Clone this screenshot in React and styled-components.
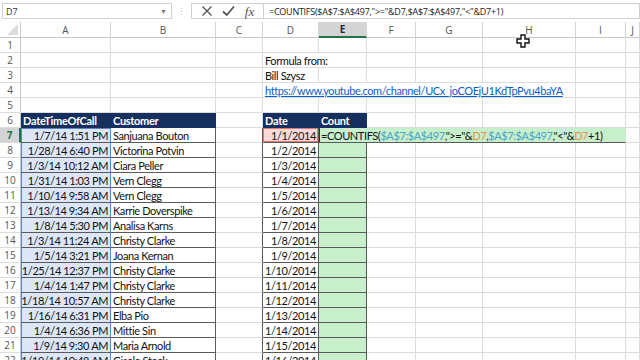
import React from 'react';
import styled, { createGlobalStyle } from 'styled-components';

const GlobalStyle = createGlobalStyle`
  html, body {
    margin: 0;
    padding: 0;
    background: #ffffff;
    overflow: hidden;
  }
  body {
    font-family: Lato, "Liberation Sans", sans-serif;
  }
`;

const GRID = '#dcdcdc';
const DARK = '#5a5a5a';
const NAVY = '#15305f';
const BLUE_EDGE = '#5b84c9';
const GREEN_FILL = '#c8efcc';

const Page = styled.div`
  position: relative;
  width: 640px;
  height: 360px;
  overflow: hidden;
  background: #fff;
`;

const Toolbar = styled.div`
  display: flex;
  align-items: center;
  height: 22px;
  padding: 0 0 0 2px;
  box-sizing: border-box;
  background: #ffffff;
`;

const NameBox = styled.div`
  display: flex;
  align-items: center;
  justify-content: space-between;
  width: 170px;
  height: 16px;
  box-sizing: border-box;
  border: 1px solid #d0d0d0;
  padding: 0 4px 0 3px;
  font-family: "Open Sans", sans-serif;
  font-size: 9px;
  color: #333;
`;

const Caret = styled.span`
  font-size: 7px;
  color: #777;
`;

const Dots = styled.div`
  width: 19px;
  text-align: center;
  color: #b0b0b0;
  font-size: 9px;
  line-height: 1;
`;

const FxGroup = styled.div`
  display: flex;
  align-items: center;
  justify-content: space-around;
  width: 72px;
  height: 16px;
  box-sizing: border-box;
  border: 1px solid #d0d0d0;
  border-right: none;
  padding: 0 4px;
`;

const FxText = styled.span`
  font-family: "Liberation Serif", serif;
  font-style: italic;
  font-size: 13px;
  color: #555;
  line-height: 1;
`;

const FormulaInput = styled.div`
  flex: 1;
  height: 16px;
  box-sizing: border-box;
  border: 1px solid #d0d0d0;
  padding: 0 5px;
  display: flex;
  align-items: center;
  font-family: "Open Sans", sans-serif;
  font-size: 9px;
  letter-spacing: -0.25px;
  color: #222;
  white-space: nowrap;
  overflow: hidden;
`;

const Sheet = styled.div`
  display: grid;
  grid-template-columns: 21px 90px 105px 47px 56px 48px 49px 67px 93px 50px 1fr;
  grid-template-rows: 16px;
  grid-auto-rows: 15px;
`;

const Corner = styled.div`
  position: relative;
  box-sizing: border-box;
  border-right: 1px solid #c8c8c8;
  border-bottom: 1px solid #c8c8c8;
  &::after {
    content: '';
    position: absolute;
    right: 2px;
    bottom: 2px;
    border-left: 11px solid transparent;
    border-bottom: 11px solid #dcdcdc;
  }
`;

const ColHead = styled.div`
  box-sizing: border-box;
  display: flex;
  align-items: center;
  justify-content: center;
  font-family: "Open Sans", sans-serif;
  font-size: 10px;
  color: ${({ $active }) => ($active ? '#262626' : '#555')};
  font-weight: ${({ $active }) => ($active ? 700 : 400)};
  background: ${({ $active }) => ($active ? '#d4d4d4' : '#fff')};
  border-right: 1px solid #d4d4d4;
  border-bottom: ${({ $active }) => ($active ? '2px solid #217346' : '1px solid #c8c8c8')};
`;

const RowHead = styled.div`
  box-sizing: border-box;
  display: flex;
  align-items: center;
  justify-content: center;
  font-family: "Open Sans", sans-serif;
  font-size: 10px;
  color: ${({ $active }) => ($active ? '#217346' : '#555')};
  font-weight: ${({ $active }) => ($active ? 700 : 400)};
  background: ${({ $active }) => ($active ? '#d4d4d4' : '#fff')};
  border-right: ${({ $active }) => ($active ? '2px solid #217346' : '1px solid #c8c8c8')};
  border-bottom: 1px solid ${GRID};
`;

const Cell = styled.div`
  box-sizing: border-box;
  display: flex;
  align-items: center;
  justify-content: ${({ $right }) => ($right ? 'flex-end' : 'flex-start')};
  padding: 1px 2px 0;
  font-size: 11px;
  letter-spacing: -0.4px;
  color: #111;
  white-space: nowrap;
  overflow: visible;
  grid-column: ${({ $span }) => ($span ? `span ${$span}` : 'auto')};
  background: ${({ $fill }) => $fill || 'transparent'};
  border-right: 1px solid ${({ $edge }) => $edge || GRID};
  border-bottom: 1px solid ${({ $under }) => $under || GRID};
`;

const HeadCell = styled(Cell)`
  background: ${NAVY};
  color: #fff;
  font-weight: 700;
  letter-spacing: -0.3px;
  border-right-color: ${NAVY};
  border-bottom-color: ${NAVY};
`;

const TimeCell = styled(Cell)`
  background: #dce6f6;
  border-right: 1px solid ${BLUE_EDGE};
  border-bottom-color: ${DARK};
  box-shadow: inset 1px 0 0 ${BLUE_EDGE}${({ $first }) => ($first ? `, inset 0 1px 0 ${BLUE_EDGE}` : '')};
`;

const DateCell = styled(Cell)`
  background: ${({ $ref }) => ($ref ? '#f9d9d9' : '#fff')};
  border-right-color: ${DARK};
  border-bottom-color: ${DARK};
  box-shadow: ${({ $ref }) => ($ref ? 'inset 0 0 0 1px #e87474' : 'none')};
`;

const CountCell = styled(Cell)`
  background: ${GREEN_FILL};
  border-right-color: ${DARK};
  border-bottom-color: ${DARK};
`;

const EditCell = styled(Cell)`
  background: ${GREEN_FILL};
  border-left: 1px solid #333;
  border-right-color: ${GREEN_FILL};
  border-bottom-color: ${DARK};
  padding-left: 1px;
`;

const RangeRef = styled.span`
  color: #4aa3c8;
`;

const CellRef = styled.span`
  color: #e0924f;
`;

const Link = styled.span`
  color: #0b5ec9;
  text-decoration: underline;
`;

const Cursor = styled.svg`
  position: absolute;
  left: 516px;
  top: 34px;
`;

const COLS = ['A', 'B', 'C', 'D', 'E', 'F', 'G', 'H', 'I', 'J'];

const calls = [
  ['1/7/14 1:51 PM', 'Sanjuana Bouton'],
  ['1/28/14 6:40 PM', 'Victorina Potvin'],
  ['1/3/14 10:12 AM', 'Ciara Peller'],
  ['1/31/14 1:03 PM', 'Vern Clegg'],
  ['1/10/14 9:58 AM', 'Vern Clegg'],
  ['1/13/14 9:34 AM', 'Karrie Doverspike'],
  ['1/8/14 5:30 PM', 'Analisa Karns'],
  ['1/3/14 11:24 AM', 'Christy Clarke'],
  ['1/5/14 3:21 PM', 'Joana Kernan'],
  ['1/25/14 12:37 PM', 'Christy Clarke'],
  ['1/4/14 1:47 PM', 'Christy Clarke'],
  ['1/18/14 10:57 AM', 'Christy Clarke'],
  ['1/16/14 6:31 PM', 'Elba Pio'],
  ['1/4/14 6:36 PM', 'Mittie Sin'],
  ['1/9/14 9:30 AM', 'Maria Arnold'],
  ['1/19/14 10:48 AM', 'Gisele Stock'],
];

const Blank = ({ n, edge }) =>
  Array.from({ length: n }, (_, i) => <Cell key={i} $edge={edge} />);

const Formula = () => (
  <>
    =COUNTIFS(<RangeRef>$A$7:$A$497</RangeRef>,"&gt;="&amp;<CellRef>D7</CellRef>,
    <RangeRef>$A$7:$A$497</RangeRef>,"&lt;"&amp;<CellRef>D7</CellRef>+1)
  </>
);

const TopRows = () => (
  <>
    <RowHead>1</RowHead>
    <Blank n={10} />

    <RowHead>2</RowHead>
    <Blank n={3} />
    <Cell $span={2}>Formula from:</Cell>
    <Blank n={5} />

    <RowHead>3</RowHead>
    <Blank n={3} />
    <Cell>Bill Szysz</Cell>
    <Blank n={6} />

    <RowHead>4</RowHead>
    <Blank n={3} />
    <Cell $span={5}>
      <Link>https://www.youtube.com/channel/UCx_joCOEjU1KdTpPvu4baYA</Link>
    </Cell>
    <Blank n={2} />

    <RowHead>5</RowHead>
    <Blank n={10} />

    <RowHead>6</RowHead>
    <HeadCell>DateTimeOfCall</HeadCell>
    <HeadCell>Customer</HeadCell>
    <Cell />
    <HeadCell>Date</HeadCell>
    <HeadCell>Count</HeadCell>
    <Blank n={5} />
  </>
);

const DataRow = ({ index, time, name }) => {
  const row = index + 7;
  const first = index === 0;
  return (
    <>
      <RowHead $active={first}>{row}</RowHead>
      <TimeCell $right $first={first}>{time}</TimeCell>
      <Cell $edge={DARK} $under={DARK}>{name}</Cell>
      <Cell $edge={DARK} />
      <DateCell $right $ref={first}>{`1/${index + 1}/2014`}</DateCell>
      {first ? (
        <>
          <EditCell $span={5}>
            <Formula />
          </EditCell>
          <Blank n={1} />
        </>
      ) : (
        <>
          <CountCell />
          <Blank n={5} />
        </>
      )}
    </>
  );
};

const App = () => (
  <Page>
    <GlobalStyle />
    <Toolbar>
      <NameBox>
        D7
        <Caret>▼</Caret>
      </NameBox>
      <Dots>⋮</Dots>
      <FxGroup>
        <svg width="12" height="12" viewBox="0 0 12 12">
          <path d="M1.5 1.5 L10.5 10.5 M10.5 1.5 L1.5 10.5" stroke="#555" strokeWidth="1.3" fill="none" />
        </svg>
        <svg width="13" height="12" viewBox="0 0 13 12">
          <path d="M1 6.5 L4.8 10 L12 1.5" stroke="#555" strokeWidth="1.8" fill="none" />
        </svg>
        <FxText>fx</FxText>
      </FxGroup>
      <FormulaInput>=COUNTIFS($A$7:$A$497,"&gt;="&amp;D7,$A$7:$A$497,"&lt;"&amp;D7+1)</FormulaInput>
    </Toolbar>
    <Sheet>
      <Corner />
      {COLS.map(c => (
        <ColHead key={c} $active={c === 'E'}>
          {c}
        </ColHead>
      ))}
      <TopRows />
      {calls.map(([time, name], i) => (
        <DataRow key={i} index={i} time={time} name={name} />
      ))}
    </Sheet>
    <Cursor width="14" height="14" viewBox="0 0 14 14">
      <path
        d="M5 1 H9 V5 H13 V9 H9 V13 H5 V9 H1 V5 H5 Z"
        fill="#fff"
        stroke="#111"
        strokeWidth="1.4"
      />
    </Cursor>
  </Page>
);

export default App;
